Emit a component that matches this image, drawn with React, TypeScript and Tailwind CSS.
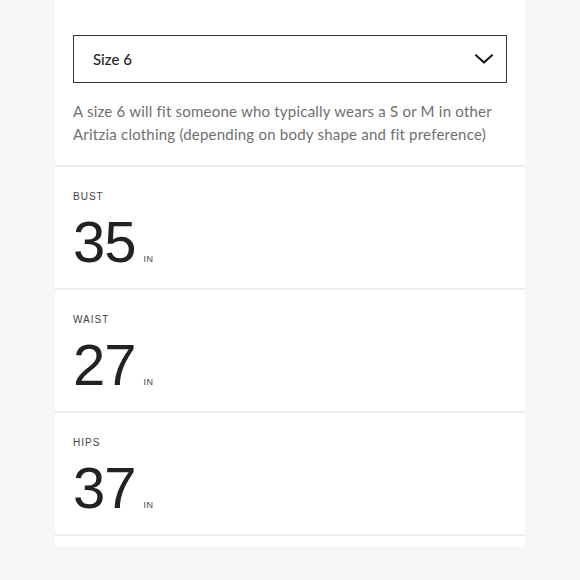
import React from "react";

const rows = [
  { label: "BUST", value: "35" },
  { label: "WAIST", value: "27" },
  { label: "HIPS", value: "37" },
];

export default function App() {
  return (
    <div className="min-h-[580px] w-[580px] bg-[#f7f7f7] overflow-hidden">
      <div className="ml-[55px] w-[470px] bg-white pb-[11px]">
        <div className="px-[18px] pt-[35px] pb-[19px]">
          <div className="flex h-[48px] items-center justify-between border-[1.5px] border-[#333] pl-[19px] pr-[13px]">
            <span className="text-[15px] font-medium text-[#222] font-['Lato',sans-serif]">Size 6</span>
            <svg width="18" height="10" viewBox="0 0 18 10" fill="none">
              <path d="M1 1.2 L9 8.6 L17 1.2" stroke="#111" strokeWidth="2" strokeLinecap="round" strokeLinejoin="round" />
            </svg>
          </div>
          <p className="mt-[17px] text-[15px] leading-[23px] tracking-[0.22px] text-[#6f6f6f] font-['Lato',sans-serif]">
            A size 6 will fit someone who typically wears a S or M in other Aritzia clothing (depending on body shape and fit preference)
          </p>
        </div>
        {rows.map((r) => (
          <div key={r.label} className="border-t-2 border-[#ececec] px-[18px] pt-[24px] pb-[17px]">
            <div className="text-[10px] leading-[12px] tracking-[1px] text-[#444] font-['Liberation_Sans',sans-serif]">
              {r.label}
            </div>
            <div className="mt-[10px] flex items-baseline">
              <span className="text-[58px] leading-none text-[#222] tracking-[-1px] font-['Liberation_Sans',sans-serif]">
                {r.value}
              </span>
              <span className="ml-[8px] text-[9px] tracking-[0.5px] text-[#444] font-['Liberation_Sans',sans-serif]">IN</span>
            </div>
          </div>
        ))}
        <div className="border-t-2 border-[#ececec]" />
      </div>
    </div>
  );
}
